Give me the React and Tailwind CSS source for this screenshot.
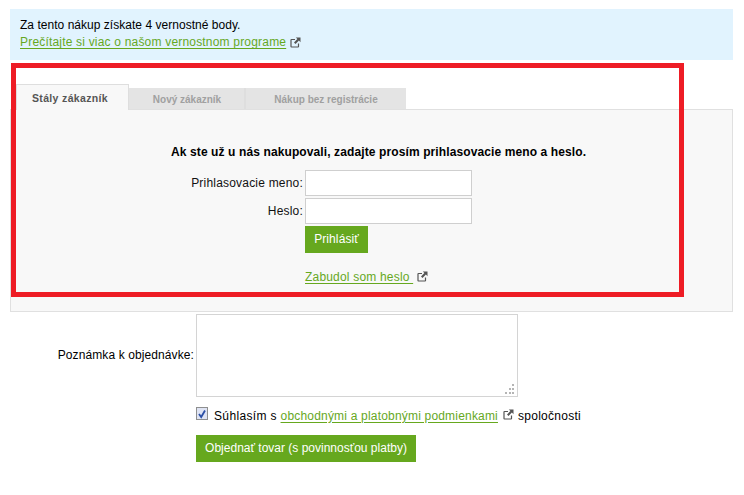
function Ext({ className = "" }) {
  return (
    <svg width="11" height="11" viewBox="0 0 11 11" className={"shrink-0 " + className} fill="none">
      <path d="M5 2.500H1.500a.5.5 0 0 0-.5.5v6.500a.5.5 0 0 0 .5.5H8a.5.5 0 0 0 .5-.5V6.500" stroke="#555" strokeWidth="1.200" />
      <path d="M5.800 0.500H10.500V5.200L8.900 3.600 5.500 7 4 5.500 7.400 2.100Z" fill="#555" />
    </svg>
  );
}

const link = "text-[#66a81e] underline decoration-[#66a81e] underline-offset-[2px] tracking-[0.190px]";

export default function App() {
  return (
    <div className="relative w-[744px] h-[495px] bg-white overflow-hidden text-[12px] leading-[15px] text-black font-['Liberation_Sans',Arial,sans-serif]">
      <div className="pl-[10px] pt-[9px] w-[733px]">
        <div className="h-[51px] bg-[#e1f3fe] pl-[10px] pt-[9px]">
          <p className="tracking-[0.030px]">Za tento nákup získate 4 vernostné body.</p>
          <p className="flex items-center gap-[4px] mt-[2px]">
            <a className={link}>Prečítajte si viac o našom vernostnom programe</a>
            <Ext />
          </p>
        </div>

        <div className="flex items-end h-[50px] pl-[6px] -mb-[1px] relative z-10 font-bold">
          <div className="w-[113px] h-[26px] pr-[5px] pt-[1px] bg-[#f8f8f8] border border-b-0 border-[#dedede] flex items-center justify-center text-[#555] text-[10.500px] tracking-[0.350px]">Stály zákazník</div>
          <div className="w-[117px] h-[21px] mb-[1px] pt-[1px] pl-[1px] bg-[#e4e4e4] border-r-2 border-[#dedede] flex items-center justify-center text-[#a0a0a0] text-[10px]">Nový zákazník</div>
          <div className="w-[160px] h-[21px] mb-[1px] pt-[1px] bg-[#e4e4e4] flex items-center justify-center text-[#a0a0a0] text-[10px]">Nákup bez registrácie</div>
        </div>

        <div className="h-[203px] bg-[#f8f8f8] border border-[#e0e0e0] pt-[35px]">
          <p className="font-bold pl-[160px] leading-[15px] tracking-[0.110px]">Ak ste už u nás nakupovali, zadajte prosím prihlasovacie meno a heslo.</p>
          <div className="grid grid-cols-[292px_167px] gap-x-[2px] gap-y-[2px] mt-[10px] items-center">
            <label className="text-right text-[#111] tracking-[0.200px]">Prihlasovacie meno:</label>
            <input className="h-[26px] bg-white border border-[#cfcfcf]" />
            <label className="text-right text-[#111] tracking-[0.200px]">Heslo:</label>
            <input className="h-[26px] bg-white border border-[#cfcfcf]" />
            <span />
            <button className="w-[63px] h-[27px] bg-[#66a81e] text-white tracking-[0.100px]">Prihlásiť</button>
            <span />
            <p className="flex items-center gap-[4px] mt-[15px] whitespace-nowrap">
              <a className={link}>Zabudol som heslo&nbsp;</a>
              <Ext className="-mt-[2px]" />
            </p>
          </div>
        </div>

        <div className="grid grid-cols-[184px_322px] gap-x-[2px] mt-[2px]">
          <label className="text-right self-center tracking-[0.100px]">Poznámka k objednávke:</label>
          <div className="relative h-[83px] bg-white border border-[#d4d4d4]">
            <svg width="12" height="12" viewBox="0 0 12 12" className="absolute right-[1px] bottom-[1px]" fill="#b5b5b5">
              <rect x="8" y="1" width="2" height="2" /><rect x="5" y="5" width="2" height="2" /><rect x="8" y="5" width="2" height="2" />
              <rect x="1" y="9" width="2" height="2" /><rect x="5" y="9" width="2" height="2" /><rect x="8" y="9" width="2" height="2" />
            </svg>
          </div>
          <span />
          <div className="flex items-center mt-[11px] h-[13px] w-[400px] whitespace-nowrap">
            <span className="w-[12px] h-[13px] -mt-[2px] border border-[#8e8f8f] bg-[#dfe4f4] flex items-center justify-center shrink-0">
              <svg width="10" height="10" viewBox="0 0 10 10" fill="none"><path d="M2 5l2.200 3L8 1.500" stroke="#2b4fa6" strokeWidth="1.800" /></svg>
            </span>
            <span className="ml-[6px] tracking-[0.350px] mt-[3px]">Súhlasím s&nbsp;</span>
            <a className={link + " mt-[3px]"}>obchodnými a platobnými podmienkami</a>
            <Ext className="ml-[5px] mr-[4px]" />
            <span className="tracking-[0.270px] mt-[3px]">spoločnosti</span>
          </div>
          <span />
          <button className="mt-[14px] w-[220px] h-[27px] bg-[#66a81e] text-white text-center">Objednať tovar (s povinnosťou platby)</button>
        </div>
      </div>

      <div className="absolute left-[11px] top-[63px] w-[673px] h-[234px] border-[5px] border-[#ee1c25] z-20 pointer-events-none" />
    </div>
  );
}
